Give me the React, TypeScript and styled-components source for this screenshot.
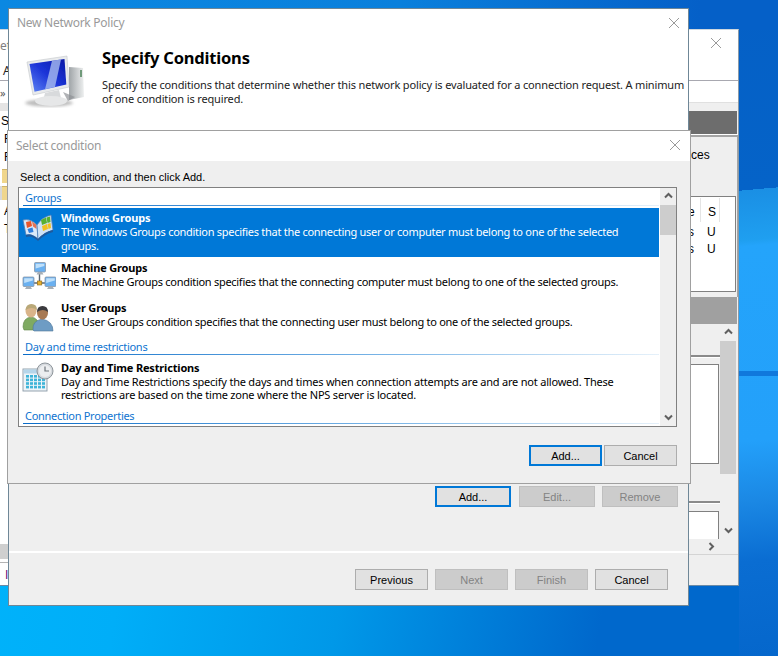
import React from "react";
import styled, { createGlobalStyle } from "styled-components";

const UI_FONT = `"Noto Sans", "Liberation Sans", sans-serif`;
const CONTROL_FONT = `"Liberation Sans", Arial, sans-serif`;

const GlobalStyle = createGlobalStyle`
  html, body {
    margin: 0;
    padding: 0;
    overflow: hidden;
  }
  * {
    box-sizing: border-box;
  }
`;

const Desktop = styled.div`
  position: relative;
  width: 778px;
  height: 656px;
  overflow: hidden;
  font-family: ${UI_FONT};
  font-size: 11px;
  color: #000;
  background:
    linear-gradient(90deg, #0b88e2 0, #0a80dc 400px, #0560c8 700px) left top / 100% 30px no-repeat,
    linear-gradient(180deg, transparent 371px, #1078dc 371px, #1078dc 376px, transparent 376px) right top / 39px 100% no-repeat,
    linear-gradient(175deg, #0560c6 0, #0563c8 190px, #1a8fe4 190px, #1f9ff0 240px, #24a4fb 246px, #23a0fa 440px, #1b88e4 500px, #0a6dd2 560px, #0567cc 656px) right top / 39px 100% no-repeat,
    linear-gradient(100deg, #00b5fc 0, #00aef8 220px, #0098e8 440px, #0068cc 700px);
`;

/* ---------- windows ---------- */

const BackWindow = styled.section`
  position: absolute;
  left: 0;
  top: 29px;
  width: 739px;
  height: 557px;
  display: flex;
  flex-direction: column;
  background: #fff;
  border-right: 1px solid #8a9aa8;
  border-bottom: 1px solid #6a8aa6;
  border-top: 1px solid #cfd8e0;
`;

const WizardWindow = styled.section`
  position: absolute;
  left: 8px;
  top: 8px;
  width: 681px;
  height: 598px;
  display: flex;
  flex-direction: column;
  background: #efefef;
  border: 1px solid #6f8797;
`;

const DialogWindow = styled.section`
  position: absolute;
  left: 7px;
  top: 130px;
  width: 684px;
  height: 354px;
  display: flex;
  flex-direction: column;
  background: #efefef;
  border: 1px solid #a0a0a0;
`;

const TitleBar = styled.header<{ $height: number; $inset: number }>`
  height: ${({ $height }) => $height}px;
  flex: none;
  display: flex;
  align-items: center;
  justify-content: space-between;
  padding: 0 ${({ $inset }) => $inset}px 2px 8px;
  background: #fff;
  color: #9a9a9a;
  font-size: 12px;
  letter-spacing: -0.27px;
`;

const CloseIcon = () => (
  <svg width="10" height="10" viewBox="0 0 10 10">
    <path d="M0 0 L10 10 M10 0 L0 10" stroke="#9a9a9a" strokeWidth="1" fill="none" />
  </svg>
);

/* ---------- back window parts ---------- */

const BackTitle = styled.div`
  height: 51px;
  flex: none;
  display: flex;
  align-items: flex-start;
  justify-content: space-between;
  padding: 8px 17px 0 0;
  border-bottom: 1px solid #a8a8b0;
`;

const BackLabels = styled.div`
  display: flex;
  flex-direction: column;
  gap: 9px;
  font-size: 12px;
  line-height: 16px;
  color: #808080;

  strong {
    font-weight: 400;
    padding-left: 3px;
    color: #222;
  }
`;

const BackColumns = styled.div`
  flex: 1;
  min-height: 0;
  display: grid;
  grid-template-columns: 1fr 50px;
  grid-template-rows: minmax(0, 1fr);
`;

const TreeColumn = styled.div`
  display: flex;
  flex-direction: column;
`;

const MenuRow = styled.div`
  height: 22px;
  flex: none;
  padding-top: 4px;
  font-size: 11px;
  color: #555;
`;

const TreeList = styled.div`
  flex: 1;
  border-top: 8px solid #e4e4e4;
  padding-top: 1px;
  font-family: ${CONTROL_FONT};
  font-size: 12px;
`;

const TreeLine = styled.div<{ $indent: number }>`
  height: 18px;
  line-height: 18px;
  padding-left: ${({ $indent }) => $indent}px;
`;

const Folder = styled.div<{ $selected?: boolean }>`
  width: 6px;
  height: 14px;
  margin: 3px 0 0 2px;
  background: #f0d68c;
  border-top: 1px solid #cdb269;
  ${({ $selected }) => $selected && "box-shadow: -2px 0 0 #d8d8d8; margin-bottom: 2px;"}
`;

const TreeScroll = styled.div`
  height: 15px;
  flex: none;
  background: #cfcfcf;
`;

const StatusCell = styled.div`
  height: 23px;
  flex: none;
  border-top: 1px solid #b4b4b4;
  margin-top: 3px;
  padding: 5px 0 0 5px;
  color: #6a0f7a;
  font-family: ${CONTROL_FONT};
  font-size: 12px;
`;

const SidePane = styled.div`
  display: flex;
  flex-direction: column;
  background: #efefef;
`;

const SideMenu = styled.div`
  height: 22px;
  flex: none;
  background: #fff;
  border-bottom: 1px solid #e0e0e0;
`;

const SideHead = styled.div<{ $tone: string; $height: number }>`
  height: ${({ $height }) => $height}px;
  flex: none;
  margin-right: 1px;
  background: ${({ $tone }) => $tone};
`;

const SideBody = styled.div`
  height: 163px;
  flex: none;
  display: flex;
  flex-direction: column;
  border-top: 1px solid #fff;
  box-shadow: inset 0 1px 0 1px #a4a4a4;
  padding: 13px 2px 5px 0;
  font-family: ${CONTROL_FONT};
  font-size: 12px;
  line-height: 14px;
`;

const SideLabel = styled.div`
  padding-left: 3px;
  height: 14px;
  flex: none;
`;

const SideBox = styled.div`
  margin-top: 34px;
  height: 96px;
  flex: none;
  background: #fff;
  border: 1px solid #808080;
  border-left: none;
  display: grid;
  grid-template-columns: 12px 20px;
  grid-template-rows: 26px 17px 17px;
  padding-top: 1px;
`;

const SideCell = styled.div<{ $head?: boolean; $first?: boolean }>`
  height: ${({ $head }) => ($head ? "24px" : "17px")};
  line-height: ${({ $head }) => ($head ? "28px" : "17px")};
  padding-left: ${({ $first }) => ($first ? "0" : "7px")};
  padding-right: ${({ $first }) => ($first ? "6px" : "0")};
  text-align: ${({ $first }) => ($first ? "right" : "left")};
  ${({ $head, $first }) => $head && !$first && "border-left: 1px solid #e4e4e4; border-right: 1px solid #e4e4e4;"}
`;

const SideStage = styled.div`
  flex: 1;
  min-height: 0;
  display: grid;
  grid-template-columns: 1fr 16px;
  grid-template-rows: minmax(0, 1fr);
  padding-right: 2px;
`;

const SideDetails = styled.div`
  display: flex;
  flex-direction: column;
  overflow: hidden;
`;

const SideRule = styled.div<{ $top: number }>`
  flex: none;
  height: 3px;
  margin-top: ${({ $top }) => $top}px;
  border-top: 2px solid #8a8a8a;
  background: #fff;
`;

const SideField = styled.div<{ $height: number; $gap: number }>`
  flex: none;
  height: ${({ $height }) => $height}px;
  margin-top: ${({ $gap }) => $gap}px;
  margin-right: 1px;
  background: #fff;
  border: 1px solid #808080;
  border-left: none;
`;

const SideHScroll = styled.div`
  height: 15px;
  flex: none;
  display: flex;
  justify-content: flex-end;
  align-items: center;
  padding-right: 22px;
`;

const SideStatus = styled.div`
  flex: none;
  height: 31px;
  border-top: 1px solid #d4d4d4;
`;

/* ---------- wizard parts ---------- */

const WizardHead = styled.div`
  flex: none;
  height: 118px;
  display: flex;
  background: #fff;
  padding: 8px 0 0 13px;
`;

const HeadIcon = styled.div`
  flex: none;
  width: 66px;
  height: 56px;
  margin-top: 9px;
`;

const HeadText = styled.div`
  margin-left: 14px;
`;

const HeadTitle = styled.h1`
  margin: 0;
  font-size: 16.5px;
  line-height: 24px;
  font-weight: 700;
  letter-spacing: -0.2px;
`;

const HeadDescription = styled.p`
  margin: 8px 0 0;
  font-size: 11px;
  line-height: 13.5px;
  letter-spacing: -0.15px;
  color: #222;
  white-space: nowrap;
`;

const WizardSpacer = styled.div`
  flex: 1;
`;

const ActionRow = styled.div`
  flex: none;
  display: flex;
  justify-content: flex-end;
  gap: 7px;
  padding: 0 10px 44px 0;
`;

const Footer = styled.footer`
  flex: none;
  display: flex;
  justify-content: flex-end;
  gap: 7px;
  height: 54px;
  padding: 16px 20px 0 0;
  border-top: 2px solid #fff;
`;

const Button = styled.button<{ $focus?: boolean; $width?: number; $trail?: number }>`
  width: ${({ $width }) => $width ?? 73}px;
  height: 21px;
  padding: 0;
  margin-right: ${({ $trail }) => $trail ?? 0}px;
  font-family: ${CONTROL_FONT};
  font-size: 11px;
  color: #000;
  background: #e1e1e1;
  border: ${({ $focus }) => ($focus ? "2px solid #0078d7" : "1px solid #adadad")};
  border-radius: 0;

  &:disabled {
    color: #838383;
    background: #cccccc;
    border-color: #bfbfbf;
  }
`;

/* ---------- select condition dialog ---------- */

const DialogBody = styled.div`
  flex: 1;
  display: flex;
  flex-direction: column;
  padding: 9px 13px 17px 10px;
`;

const Prompt = styled.div`
  height: 17px;
  flex: none;
  font-family: ${CONTROL_FONT};
  font-size: 11px;
  line-height: 14px;
  padding-left: 2px;
`;

const ConditionList = styled.div`
  height: 240px;
  flex: none;
  display: grid;
  grid-template-columns: 1fr 16px;
  background: #fff;
  border: 1px solid #808080;
`;

const ListContent = styled.div`
  overflow: hidden;
  padding-right: 1px;
`;

const GroupHeading = styled.div<{ $height: number; $after?: number }>`
  height: ${({ $height }) => $height}px;
  margin: 0 0 ${({ $after }) => $after ?? 0}px 4px;
  padding-left: 2px;
  display: flex;
  align-items: flex-end;
  color: #0f74d0;
  font-size: 11px;
  line-height: 14px;
  letter-spacing: -0.28px;
  border-bottom: 1px solid;
  border-image: linear-gradient(90deg, #0a6cc8, #7fb8e8 60%, #e6f1fa) 1;
`;

const ConditionRow = styled.div<{ $selected?: boolean; $height: number; $pad: number }>`
  height: ${({ $height }) => $height}px;
  display: flex;
  gap: 7px;
  padding: ${({ $pad }) => $pad}px 0 0 3px;
  background: ${({ $selected }) => ($selected ? "#0078d7" : "#fff")};
  color: ${({ $selected }) => ($selected ? "#fff" : "#000")};
`;

const RowIcon = styled.div`
  width: 32px;
  height: 32px;
  flex: none;
  padding-top: 1px;
`;

const RowTitle = styled.div`
  font-weight: 700;
  font-size: 11px;
  line-height: 14px;
  letter-spacing: -0.17px;
`;

const RowDescription = styled.div<{ $loose?: boolean }>`
  font-size: 11px;
  line-height: 13.5px;
  letter-spacing: ${({ $loose }) => ($loose ? "-0.21px" : "-0.28px")};
  white-space: nowrap;
`;

const DialogActions = styled.div`
  flex: none;
  display: flex;
  justify-content: flex-end;
  gap: 2px;
  padding-top: 18px;
`;

const ScrollTrack = styled.div`
  display: flex;
  flex-direction: column;
  align-items: center;
  background: #efefef;
`;

const ScrollButton = styled.div`
  height: 17px;
  flex: none;
  width: 100%;
  display: flex;
  align-items: center;
  justify-content: center;
`;

const ScrollThumb = styled.div<{ $height: number }>`
  width: 100%;
  height: ${({ $height }) => $height}px;
  flex: none;
  background: #cdcdcd;
`;

const ScrollGap = styled.div`
  flex: 1;
`;

const Chevron = ({ dir }: { dir: "up" | "down" | "right" }) => {
  const d = {
    up: "M1 5.5 L4.5 2 L8 5.5",
    down: "M1 2.5 L4.5 6 L8 2.5",
    right: "M2.5 1 L6 4.5 L2.5 8",
  }[dir];
  return (
    <svg width="9" height="9" viewBox="0 0 9 9">
      <path d={d} stroke="#606060" strokeWidth="2" fill="none" />
    </svg>
  );
};

/* ---------- icons ---------- */

const MonitorIcon = () => (
  <svg width="66" height="56" viewBox="0 0 66 56">
    <defs>
      <linearGradient id="screen" x1="0" y1="1" x2="1" y2="0">
        <stop offset="0" stopColor="#5f86f4" />
        <stop offset="0.5" stopColor="#1c34d8" />
        <stop offset="1" stopColor="#0818a4" />
      </linearGradient>
      <linearGradient id="tower" x1="0" y1="0" x2="1" y2="0">
        <stop offset="0" stopColor="#a0a5a8" />
        <stop offset="1" stopColor="#eef0f0" />
      </linearGradient>
      <filter id="soft">
        <feGaussianBlur stdDeviation="1.6" />
      </filter>
      <filter id="slight">
        <feGaussianBlur stdDeviation="0.35" />
      </filter>
    </defs>
    <ellipse cx="27" cy="48" rx="24" ry="3.5" fill="#bcbcbc" filter="url(#soft)" />
    <g filter="url(#slight)">
      <path d="M47 12 L61 13 L62 42 L47 45 Z" fill="url(#tower)" />
      <rect x="58" y="15" width="2" height="7" fill="#6f9a7a" />
      <path d="M5 7 L45 1 L47 32 L11 40 Z" fill="#e8eaec" stroke="#c4c8cb" strokeWidth="0.6" />
      <path d="M7.5 9 L42.5 4 L44.3 29.5 L12.5 36.8 Z" fill="url(#screen)" />
      <path d="M30 5.8 L39 4.5 L33 31.9 L23 34.2 Z" fill="#a8bcf0" opacity="0.8" />
      <path d="M23 38 L37 35 L39 43 L21 46 Z" fill="#d8dadc" />
      <ellipse cx="29" cy="46" rx="16" ry="5" fill="#e6e7e8" />
      <path d="M41 37 L53 42 L46 46 Z" fill="#8e9295" opacity="0.7" />
    </g>
  </svg>
);

const WindowsBookIcon = () => (
  <svg width="32" height="30" viewBox="0 0 32 30">
    <path d="M1 8 Q8 6 15 13 L16 27 Q9 21 4 23 Z" fill="#dbe9f8" stroke="#4f7fb8" strokeWidth="0.8" />
    <path d="M15 13 Q20 5 29 3 L31 18 Q23 20 16 27 Z" fill="#cfe1f5" stroke="#4f7fb8" strokeWidth="0.8" />
    <path d="M4 10 L9 9 L10 14 L5 16 Z" fill="#e8562c" />
    <path d="M5.5 17 L10.5 15.5 L11.5 20 L7 21 Z" fill="#2f7fe0" />
    <path d="M10 9.5 L14 12.5 L14.5 17 L11 14.5 Z" fill="#e8562c" opacity="0.8" />
    <path d="M19 8 L24 5.5 L25 11 L20 13 Z" fill="#58b030" />
    <path d="M24.5 5.5 L28 4.5 L28.5 10 L25.5 11 Z" fill="#58b030" />
    <path d="M20 14 L25 12 L26 17 L21 19 Z" fill="#f0c020" />
    <path d="M25.5 12 L28.5 11 L29 16 L26.5 17 Z" fill="#f0c020" />
    <path d="M4 23 Q10 21 16 27 Q22 20 31 18 L31 20 Q23 22 16 29 Q10 23 4 25 Z" fill="#1f5a9c" />
  </svg>
);

const SmallScreen = ({ x, y }: { x: number; y: number }) => (
  <g transform={`translate(${x} ${y})`}>
    <rect x="0" y="0" width="11" height="9.5" rx="1" fill="#6ab0f0" stroke="#8a97a6" strokeWidth="0.8" />
    <path d="M1.2 1.2 H9.8 V3.5 L1.2 6 Z" fill="#bfe0fa" />
    <path d="M3.5 9.5 H7.5 L9 12 H2 Z" fill="#a6aeb6" />
  </g>
);

const MachineGroupsIcon = () => (
  <svg width="34" height="32" viewBox="0 0 34 32">
    <path d="M17.5 12 V21 M7 21 H28" stroke="#5a6670" strokeWidth="1.4" />
    <SmallScreen x={12.5} y={0.5} />
    <SmallScreen x={1} y={15} />
    <SmallScreen x={23} y={15} />
    <rect x="15.3" y="19" width="4.5" height="4" fill="#e8b030" stroke="#8a6a1a" strokeWidth="0.6" />
  </svg>
);

const UserGroupsIcon = () => (
  <svg width="32" height="30" viewBox="0 0 32 30">
    <path d="M1 25 Q1 16 9 15 Q17 16 17 25 L17 28 L2 28 Z" fill="#7faa62" stroke="#5f8448" strokeWidth="0.6" />
    <ellipse cx="9" cy="9" rx="5.5" ry="6.5" fill="#d9b48a" />
    <path d="M3.5 8 Q4 2 9.5 2 Q15 2 15 8 Q10 4 3.5 8 Z" fill="#b9a878" />
    <path d="M11 28 Q10 19 20 17 Q31 19 31 29 L12 29 Z" fill="#6e9cc4" stroke="#4d7698" strokeWidth="0.6" />
    <ellipse cx="20.5" cy="11" rx="5.5" ry="6.5" fill="#a87a54" />
    <path d="M15 10 Q15 4 20.5 4 Q26 4 26 10 Q21 6 15 10 Z" fill="#3a3a3e" />
  </svg>
);

const CalendarIcon = () => {
  const cells: React.ReactElement[] = [];
  for (let r = 0; r < 4; r++) {
    for (let c = 0; c < 5; c++) {
      cells.push(<rect key={`${r}-${c}`} x={4 + c * 4} y={13 + r * 3.6} width="3" height="2.6" fill="#3fb4d8" />);
    }
  }
  return (
    <svg width="32" height="30" viewBox="0 0 32 30">
      <rect x="1" y="7" width="24" height="22" fill="#eef4f8" stroke="#8a9aa6" strokeWidth="0.9" />
      <rect x="1.5" y="7.5" width="23" height="4" fill="#b6d6ea" />
      {cells}
      <circle cx="23" cy="9" r="8" fill="#d6dade" stroke="#8e959b" strokeWidth="1" />
      <circle cx="23" cy="9" r="6" fill="#eceef0" />
      <path d="M23 4.5 V9 H27" stroke="#6f767c" strokeWidth="1.2" fill="none" />
    </svg>
  );
};

const App = () => (
  <Desktop>
    <GlobalStyle />

    <BackWindow>
      <BackTitle>
        <BackLabels>
          <span>et</span>
          <strong>A</strong>
        </BackLabels>
        <CloseIcon />
      </BackTitle>
      <BackColumns>
        <TreeColumn>
          <MenuRow>»</MenuRow>
          <TreeList>
            <TreeLine $indent={1}>S</TreeLine>
            <TreeLine $indent={4}>F</TreeLine>
            <TreeLine $indent={4}>F</TreeLine>
            <Folder />
            <Folder $selected />
            <TreeLine $indent={4}>A</TreeLine>
            <TreeLine $indent={4}>T</TreeLine>
          </TreeList>
          <TreeScroll />
          <StatusCell>I</StatusCell>
        </TreeColumn>
        <SidePane>
          <SideMenu />
          <SideHead $tone="#efefef" $height={8} />
          <SideHead $tone="#6d6d6d" $height={23} />
          <SideBody>
            <SideLabel>ces</SideLabel>
            <SideBox>
              <SideCell $head $first>e</SideCell>
              <SideCell $head>S</SideCell>
              <SideCell $first>s</SideCell>
              <SideCell>U</SideCell>
              <SideCell $first>s</SideCell>
              <SideCell>U</SideCell>
            </SideBox>
          </SideBody>
          <SideHead $tone="#a0a0a0" $height={27} />
          <SideStage>
            <SideDetails>
              <SideRule $top={31} />
              <SideField $height={100} $gap={6} />
              <SideRule $top={37} />
              <SideField $height={40} $gap={7} />
            </SideDetails>
            <ScrollTrack>
              <ScrollButton>
                <Chevron dir="up" />
              </ScrollButton>
              <ScrollThumb $height={133} />
              <ScrollGap />
              <ScrollButton>
                <Chevron dir="down" />
              </ScrollButton>
            </ScrollTrack>
          </SideStage>
          <SideHScroll>
            <Chevron dir="right" />
          </SideHScroll>
          <SideStatus />
        </SidePane>
      </BackColumns>
    </BackWindow>

    <WizardWindow>
      <TitleBar $height={29} $inset={9}>
        New Network Policy
        <CloseIcon />
      </TitleBar>
      <WizardHead>
        <HeadIcon>
          <MonitorIcon />
        </HeadIcon>
        <HeadText>
          <HeadTitle>Specify Conditions</HeadTitle>
          <HeadDescription>
            Specify the conditions that determine whether this network policy is evaluated for a connection request. A minimum
            <br />
            of one condition is required.
          </HeadDescription>
        </HeadText>
      </WizardHead>
      <WizardSpacer />
      <ActionRow>
        <Button $focus $width={76} $trail={1}>Add...</Button>
        <Button disabled $width={76}>Edit...</Button>
        <Button disabled $width={76}>Remove</Button>
      </ActionRow>
      <Footer>
        <Button>Previous</Button>
        <Button disabled>Next</Button>
        <Button disabled>Finish</Button>
        <Button>Cancel</Button>
      </Footer>
    </WizardWindow>

    <DialogWindow>
      <TitleBar $height={30} $inset={10}>
        Select condition
        <CloseIcon />
      </TitleBar>
      <DialogBody>
        <Prompt>Select a condition, and then click Add.</Prompt>
        <ConditionList>
          <ListContent>
            <GroupHeading $height={18} $after={2}>Groups</GroupHeading>
            <ConditionRow $selected $height={49} $pad={3}>
              <RowIcon>
                <WindowsBookIcon />
              </RowIcon>
              <div>
                <RowTitle>Windows Groups</RowTitle>
                <RowDescription>
                  The Windows Groups condition specifies that the connecting user or computer must belong to one of the selected
                  <br />
                  groups.
                </RowDescription>
              </div>
            </ConditionRow>
            <ConditionRow $height={40} $pad={4}>
              <RowIcon>
                <MachineGroupsIcon />
              </RowIcon>
              <div>
                <RowTitle>Machine Groups</RowTitle>
                <RowDescription>
                  The Machine Groups condition specifies that the connecting computer must belong to one of the selected groups.
                </RowDescription>
              </div>
            </ConditionRow>
            <ConditionRow $height={41} $pad={4}>
              <RowIcon>
                <UserGroupsIcon />
              </RowIcon>
              <div>
                <RowTitle>User Groups</RowTitle>
                <RowDescription>
                  The User Groups condition specifies that the connecting user must belong to one of the selected groups.
                </RowDescription>
              </div>
            </ConditionRow>
            <GroupHeading $height={17}>Day and time restrictions</GroupHeading>
            <ConditionRow $height={52} $pad={5.5}>
              <RowIcon>
                <CalendarIcon />
              </RowIcon>
              <div>
                <RowTitle>Day and Time Restrictions</RowTitle>
                <RowDescription $loose>
                  Day and Time Restrictions specify the days and times when connection attempts are and are not allowed. These
                  <br />
                  restrictions are based on the time zone where the NPS server is located.
                </RowDescription>
              </div>
            </ConditionRow>
            <GroupHeading $height={17}>Connection Properties</GroupHeading>
          </ListContent>
          <ScrollTrack>
            <ScrollButton>
              <Chevron dir="up" />
            </ScrollButton>
            <ScrollThumb $height={30} />
            <ScrollGap />
            <ScrollButton>
              <Chevron dir="down" />
            </ScrollButton>
          </ScrollTrack>
        </ConditionList>
        <DialogActions>
          <Button $focus>Add...</Button>
          <Button>Cancel</Button>
        </DialogActions>
      </DialogBody>
    </DialogWindow>
  </Desktop>
);

export default App;
